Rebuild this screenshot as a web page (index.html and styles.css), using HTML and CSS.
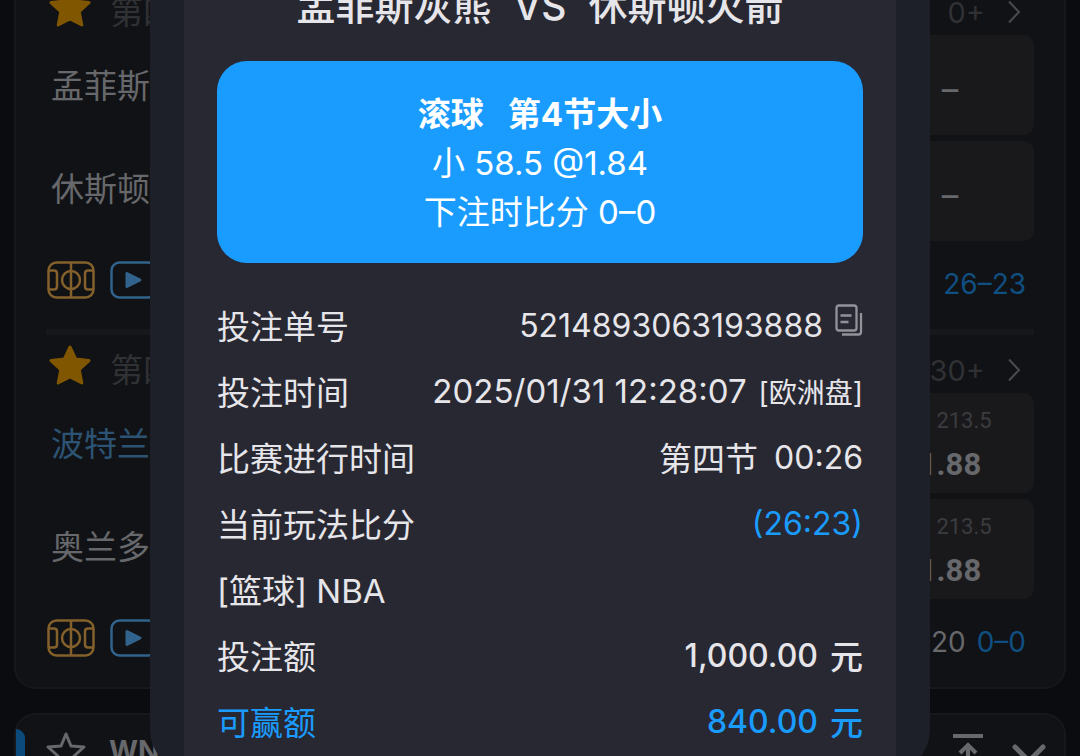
FILE: index.html
```html
<!DOCTYPE html>
<html lang="zh-CN">
<head>
    <meta charset="UTF-8">
    <meta name="viewport" content="width=device-width, initial-scale=1.0">
    <title>注单详情</title>
    <link rel="stylesheet" href="styles.css">
</head>
<body>

    <svg class="sprite" aria-hidden="true">
        <symbol id="icon-star" viewBox="0 0 42 40">
            <path d="M21 2l5.600 12 13.400 1.600-9.800 9 2.600 13.400L21 32l-11.800 6 2.600-13.400-9.800-9L15.400 14z" fill="currentColor" stroke="currentColor" stroke-width="3" stroke-linejoin="round"/>
        </symbol>
        <symbol id="icon-court" viewBox="0 0 48 38">
            <g fill="none" stroke="currentColor" stroke-width="2.500">
                <rect x="1.500" y="1.500" width="45" height="35" rx="8"/>
                <circle cx="24" cy="19" r="9"/>
                <path d="M24 1v36M2 9.500h5q3 0 3 3v13q0 3-3 3H2M46 9.500h-5q-3 0-3 3v13q0 3 3 3h5"/>
            </g>
        </symbol>
        <symbol id="icon-play" viewBox="0 0 48 38">
            <rect x="1.500" y="1.500" width="45" height="35" rx="8" fill="none" stroke="currentColor" stroke-width="2.500"/>
            <path d="M17 12.500v13l13-6.500z" fill="currentColor" stroke="currentColor" stroke-width="3" stroke-linejoin="round"/>
        </symbol>
        <symbol id="icon-next" viewBox="0 0 14 24">
            <path d="M2 1.500L12 12 2 22.500" fill="none" stroke="currentColor" stroke-width="2"/>
        </symbol>
    </svg>

    <main class="page">
        <section class="card card-live">
            <article class="match">
                <header class="match-head">
                    <svg class="star"><use href="#icon-star"/></svg>
                    <span class="period">第四节</span>
                    <a class="more" href="#">0+ <svg class="next"><use href="#icon-next"/></svg></a>
                </header>
                <div class="match-body">
                    <div class="teams">
                        <div class="team">孟菲斯灰熊</div>
                        <div class="team">休斯顿火箭</div>
                    </div>
                    <div class="odds">
                        <button class="odd odd-empty">–</button>
                        <button class="odd odd-empty">–</button>
                    </div>
                </div>
                <footer class="match-foot">
                    <svg class="tag tag-court"><use href="#icon-court"/></svg>
                    <svg class="tag tag-play"><use href="#icon-play"/></svg>
                    <div class="score"><span class="score-now">26–23</span></div>
                </footer>
            </article>

            <article class="match">
                <header class="match-head">
                    <svg class="star"><use href="#icon-star"/></svg>
                    <span class="period">第四节</span>
                    <a class="more" href="#">30+ <svg class="next"><use href="#icon-next"/></svg></a>
                </header>
                <div class="match-body">
                    <div class="teams">
                        <div class="team team-lead">波特兰开拓者</div>
                        <div class="team">奥兰多魔术</div>
                    </div>
                    <div class="odds">
                        <button class="odd"><span class="line"><span>大</span>213.5</span><b class="price">1.88</b></button>
                        <button class="odd"><span class="line"><span>小</span>213.5</span><b class="price">1.88</b></button>
                    </div>
                </div>
                <footer class="match-foot">
                    <svg class="tag tag-court"><use href="#icon-court"/></svg>
                    <svg class="tag tag-play"><use href="#icon-play"/></svg>
                    <div class="score">20 <span class="score-now">0–0</span></div>
                </footer>
            </article>
        </section>

        <section class="card card-league">
            <svg class="league-star" viewBox="0 0 42 40">
                <path d="M21 3l5 12 13 1-10 9 3 13-11-7-11 7 3-13L3 16l13-1z" fill="none" stroke="currentColor" stroke-width="3" stroke-linejoin="round"/>
            </svg>
            <h2 class="league-name">WNBA</h2>
            <svg class="to-top" viewBox="0 0 32 40">
                <path d="M1 3h30M16 38V13M8 20l8-8 8 8" fill="none" stroke="currentColor" stroke-width="4"/>
            </svg>
            <svg class="fold" viewBox="0 0 34 22">
                <path d="M3 3l14 14L31 3" fill="none" stroke="currentColor" stroke-width="5" stroke-linecap="round"/>
            </svg>
        </section>
    </main>

    <div class="overlay">
        <div class="dialog" role="dialog" aria-labelledby="betTitle">
            <div class="ticket">
                <h1 class="ticket-title" id="betTitle"><span>孟菲斯灰熊</span><span>VS</span><span>休斯顿火箭</span></h1>

                <div class="pick">
                    <div class="pick-title"><span>滚球</span><span>第4节大小</span></div>
                    <div>小 58.5 @1.84</div>
                    <div>下注时比分 0–0</div>
                </div>

                <dl class="details">
                    <div class="row">
                        <dt>投注单号</dt>
                        <dd class="number">5214893063193888
                            <button class="copy-btn" aria-label="复制">
                                <svg viewBox="0 0 28 32">
                                    <path d="M4 1.500h15q2.500 0 2.500 2.500v20q0 2.500-2.500 2.500H4q-2.500 0-2.500-2.500V4q0-2.500 2.500-2.500zM26 9v19q0 2.500-2.500 2.500H7M5.500 11.500h11M5.500 18h8" fill="none" stroke="currentColor" stroke-width="2.300"/>
                                </svg>
                            </button>
                        </dd>
                    </div>
                    <div class="row">
                        <dt>投注时间</dt>
                        <dd>2025/01/31 12:28:07 <small>[欧洲盘]</small></dd>
                    </div>
                    <div class="row">
                        <dt>比赛进行时间</dt>
                        <dd class="clock"><span>第四节</span><span class="number">00:26</span></dd>
                    </div>
                    <div class="row">
                        <dt>当前玩法比分</dt>
                        <dd class="number blue">(26:23)</dd>
                    </div>
                    <div class="row">
                        <dt>[篮球] NBA</dt>
                    </div>
                    <div class="row">
                        <dt>投注额</dt>
                        <dd class="amount"><span class="number">1,000.00</span><span>元</span></dd>
                    </div>
                    <div class="row blue">
                        <dt>可赢额</dt>
                        <dd class="amount"><span class="number">840.00</span><span>元</span></dd>
                    </div>
                </dl>
            </div>
        </div>
    </div>

</body>
</html>
```
FILE: styles.css
```css
:root {
    --page: #0b0c10;
    --card: #111215;
    --line: #17181b;
    --box: #19191c;
    --faint: #303134;
    --muted: #67686b;
    --dialog: #1e2029;
    --ticket: #282832;
    --text: #e6e6ea;
    --blue: #1a9cff;
}

* {
    box-sizing: border-box;
}

body {
    margin: 0;
    height: 100vh;
    overflow: hidden;
    background: var(--page);
    color: var(--muted);
    font-family: Inter, "Noto Sans CJK SC", sans-serif;
    font-size: 33px;
}

button {
    border: none;
    padding: 0;
    font-family: inherit;
    color: inherit;
    cursor: pointer;
}

.sprite {
    position: absolute;
    width: 0;
    height: 0;
}

/* match list */
.page {
    padding: 0 14px;
    margin-top: -31px;
}
.card {
    background: var(--card);
    border: 2px solid var(--line);
    border-radius: 22px;
    margin-bottom: 24px;
}
.match {
    padding: 0 30px;
}
.match + .match .match-head {
    border-top: 6px solid var(--line);
}
.match-head {
    display: flex;
    align-items: center;
    height: 64px;
    padding-top: 12px;
    color: var(--faint);
}
.match:first-child .match-head {
    padding-top: 18px;
}
.star {
    width: 42px;
    height: 40px;
    margin: 0 0 10px 3px;
    color: #805600;
}
.period {
    margin-left: 19px;
    font-size: 33px;
    line-height: 33px;
}
.more {
    display: flex;
    align-items: center;
    gap: 22px;
    margin-left: auto;
    padding-right: 13px;
    color: inherit;
    font-size: 29px;
    text-decoration: none;
}
.next {
    width: 14px;
    height: 24px;
    color: #4a4b4e;
}
.match-body {
    display: flex;
    justify-content: space-between;
}
.team {
    height: 103px;
    padding-left: 5px;
    line-height: 103px;
}
.team-lead {
    color: #2c5373;
}
.odds {
    display: flex;
    flex-direction: column;
    gap: 6px;
    width: 168px;
}
.odd {
    display: flex;
    flex-direction: column;
    align-items: center;
    justify-content: center;
    height: 100px;
    border-radius: 10px;
    background: var(--box);
}
.odd-empty {
    padding-top: 8px;
    font-size: 33px;
}
.line {
    display: flex;
    gap: 6px;
    color: #3b3c3f;
    font-family: Roboto, "Noto Sans CJK SC", sans-serif;
    font-size: 22px;
    line-height: 44px;
}
.price {
    font-family: Roboto, sans-serif;
    font-size: 31px;
    line-height: 44px;
}
.match-foot {
    display: flex;
    align-items: center;
    gap: 15px;
    height: 88px;
    padding: 0 0 10px 1px;
}
.tag {
    width: 48px;
    height: 38px;
}
.tag-court {
    color: #84602b;
}
.tag-play {
    color: #31638c;
}
.score {
    margin-left: auto;
    padding: 8px 8px 0 0;
    font-size: 28px;
}
.score-now {
    margin-left: 3px;
    color: #0f4f82;
}

.card-league {
    display: flex;
    align-items: center;
    height: 72px;
    padding: 0 18px 0 29px;
    position: relative;
}
.card-league::before {
    content: "";
    position: absolute;
    left: 0;
    top: 14px;
    bottom: 0;
    width: 9px;
    border-radius: 0 9px 0 0;
    background: #0d4a7c;
}
.league-star {
    width: 42px;
    height: 40px;
    margin-top: 4px;
}
.league-name {
    margin: 4px auto 0 22px;
    font-size: 28px;
}
.to-top {
    width: 32px;
    height: 40px;
    margin: 8px 28px 0 0;
}
.fold {
    width: 34px;
    height: 22px;
    margin-top: 12px;
}

/* bet dialog */
.overlay {
    position: fixed;
    inset: 0;
    display: flex;
    align-items: flex-start;
    padding: 0 150px;
}
.dialog {
    flex: 1;
    margin-top: -19px;
    padding: 0 34px;
    border-radius: 0 0 42px 42px;
    background: var(--dialog);
    color: var(--text);
}
.ticket {
    padding: 0 33px 18px;
    background: var(--ticket);
}
.ticket-title {
    display: flex;
    justify-content: center;
    gap: 22px;
    margin: 0 0 30px;
    font-size: 39px;
    font-weight: 500;
    line-height: 50px;
}
.pick {
    padding: 29px 28px 26px;
    border-radius: 30px;
    background: var(--blue);
    color: #fff;
    line-height: 49px;
    text-align: center;
}
.pick-title {
    display: flex;
    justify-content: center;
    gap: 24px;
    font-weight: 700;
}
.details {
    margin: 29px 0 0;
}
.row {
    display: flex;
    align-items: center;
    justify-content: space-between;
    height: 66px;
    white-space: nowrap;
}
.row dd {
    display: flex;
    align-items: center;
    gap: 12px;
    margin: 0;
}
.row small {
    font-size: 28px;
}
.row .clock {
    gap: 16px;
}
.row .amount {
    font-weight: 500;
}
.number {
    font-size: 32px;
}
.blue {
    color: var(--blue);
}
.copy-btn {
    background: none;
    color: #92929b;
}
.copy-btn svg {
    display: block;
    width: 28px;
    height: 32px;
    margin-bottom: 10px;
}
```
